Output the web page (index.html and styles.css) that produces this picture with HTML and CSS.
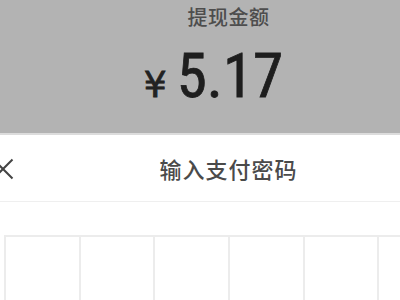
FILE: index.html
```html
<!DOCTYPE html>
<html lang="zh-CN">
<head>
  <meta charset="UTF-8">
  <meta name="viewport" content="width=device-width, initial-scale=1.0">
  <title>提现</title>
  <link rel="stylesheet" href="styles.css">
</head>
<body>
  <div class="screen">
    <div class="withdraw">
      <p class="withdraw-label">提现金额</p>
      <div class="withdraw-amount">
        <span class="currency">¥</span>
        <span class="value">5.17</span>
      </div>
    </div>

    <div class="pay-panel">
      <div class="pay-header">
        <span class="close">
          <svg width="22" height="22" viewBox="0 0 22 22">
            <path d="M1.5 1.5 L20.5 20.5 M20.5 1.5 L1.5 20.5" stroke="#444" stroke-width="2" fill="none"/>
          </svg>
        </span>
        <h2>输入支付密码</h2>
      </div>

      <div class="pin-boxes">
        <div class="pin"></div>
        <div class="pin"></div>
        <div class="pin"></div>
        <div class="pin"></div>
        <div class="pin"></div>
        <div class="pin"></div>
      </div>
    </div>
  </div>
</body>
</html>
```

FILE: styles.css
```css
/* Reset */
* {
  margin: 0;
  padding: 0;
  box-sizing: border-box;
}

html, body {
  width: 400px;
  height: 300px;
  overflow: hidden;
}

body {
  font-family: "Noto Sans CJK SC", "Noto Sans", sans-serif;
  background-color: #fff;
}

.screen {
  width: 457px;
}

/* Valor do saque */
.withdraw {
  background-color: #b3b3b3;
  height: 133px;
  text-align: center;
  padding-top: 2px;
}

.withdraw-label {
  font-size: 20px;
  font-weight: 500;
  line-height: 30px;
  color: #4d4d4d;
  letter-spacing: 0.5px;
}

.withdraw-amount {
  display: flex;
  justify-content: center;
  align-items: baseline;
  gap: 10px;
  margin-top: 8px;
  padding-right: 30px;
}

.currency {
  font-family: "DejaVu Sans", sans-serif;
  font-size: 36px;
  color: #222;
  -webkit-text-stroke: 0.8px #222;
}

.value {
  font-family: "Liberation Sans Narrow", "Roboto Condensed", "DejaVu Sans Condensed", sans-serif;
  font-size: 61px;
  line-height: 72px;
  color: #1e1e1e;
  -webkit-text-stroke: 0.8px #1e1e1e;
}

/* Painel de senha */
.pay-panel {
  border-top: 2px solid #dcdcdc;
  background-color: #fff;
}

.pay-header {
  position: relative;
  height: 67px;
  border-bottom: 1px solid #efefef;
  display: flex;
  align-items: center;
  justify-content: center;
}

.pay-header h2 {
  font-size: 22px;
  font-weight: 500;
  color: #4a4a4a;
  letter-spacing: 1px;
}

.close {
  position: absolute;
  left: -8px;
  top: 23px;
}

.pin-boxes {
  display: flex;
  margin: 33px 0 0 4px;
  border-top: 2px solid #ececec;
  border-left: 2px solid #ececec;
  width: 450px;
}

.pin {
  width: 75px;
  height: 90px;
  border-right: 2px solid #ececec;
}
```
